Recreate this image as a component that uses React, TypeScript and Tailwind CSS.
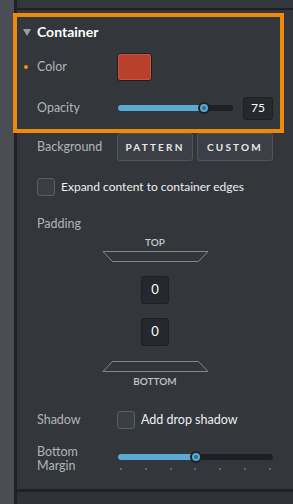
import React from "react";

function Trap({ flip }: { flip?: boolean }) {
  return (
    <svg width="107" height="11" viewBox="0 0 107 11" className="block">
      {flip ? (
        <path d="M10.5 0.5 H96.5 L106 10.5 H1 Z" fill="none" stroke="#83878d" strokeWidth="1" />
      ) : (
        <path d="M1 0.5 H106 L96.5 10.5 H10.5 Z" fill="none" stroke="#83878d" strokeWidth="1" />
      )}
    </svg>
  );
}

function Slider({ width, pct }: { width: number; pct: number }) {
  return (
    <div className="relative h-[6px] rounded-full bg-[#1e2024]" style={{ width }}>
      <div
        className="absolute left-0 top-0 h-[6px] rounded-full bg-[#5aaad4]"
        style={{ width: width * pct }}
      />
      <div
        className="absolute top-1/2 w-[12px] h-[12px] -translate-x-1/2 -translate-y-1/2 rounded-full bg-[#5aaad4] border-2 border-[#1e2125] flex items-center justify-center"
        style={{ left: width * pct }}
      >
        <div className="w-[4px] h-[4px] rounded-full bg-[#2f6f92]" />
      </div>
    </div>
  );
}

export default function App() {
  const font = { fontFamily: "Lato, 'Open Sans', sans-serif" };
  return (
    <div className="w-[293px] h-[504px] overflow-hidden flex bg-[#33363b]" style={font}>
      <div className="w-[14px] h-full bg-[#4a4d53]" />
      <div className="w-[3px] h-full bg-[#1f2125]" />
      <div className="flex-1 flex flex-col h-full">
        <div className="h-[8px]" />
        <div className="h-[2px] bg-[#1f2125]" />
        <div className="h-[3px]" />
        {/* Highlighted container section */}
        <div className="ml-[-4px] w-[271px] h-[120px] border-4 border-[#f08a0c] relative z-10 flex flex-col">
          <div className="h-[30px] flex items-center pl-[6px]">
            <svg width="8" height="7" viewBox="0 0 8 7" className="block">
              <path d="M0 0 H8 L4 7 Z" fill="#9a9ea4" />
            </svg>
            <span className="ml-[6px] text-[14px] font-bold text-white leading-none">Container</span>
          </div>
          <div className="h-[40px] flex items-center relative">
            <div className="absolute left-[7px] top-1/2 -translate-y-1/2 w-[4px] h-[4px] rounded-full bg-[#f0960f]" />
            <span className="ml-[20px] w-[80px] text-[12.5px] text-[#b1b5bb]">Color</span>
            <div className="w-[35px] h-[28px] rounded-[3px] bg-[#b9402a] border border-[#1e1f22] shadow-[inset_0_0_0_1px_rgba(255,255,255,0.12)]" />
          </div>
          <div className="h-[42px] flex items-center">
            <span className="ml-[20px] w-[81px] text-[12.5px] text-[#b1b5bb]">Opacity</span>
            <Slider width={115} pct={0.75} />
            <div className="ml-[10px] w-[30px] h-[23px] rounded-[3px] bg-[#25282c] border border-[#1d1f22] flex items-center justify-center text-[12px] text-white">
              75
            </div>
          </div>
        </div>
        {/* Background row */}
        <div className="h-[28px] flex items-center">
          <span className="ml-[20px] w-[80px] text-[12.5px] text-[#b1b5bb]">Background</span>
          <button className="w-[76px] h-[28px] rounded-[3px] bg-[#3c4046] border border-[#52565c] text-[10px] font-bold tracking-[2.2px] text-[#e6e8eb] flex items-center justify-center">
            PATTERN
          </button>
          <button className="ml-[4px] w-[76px] h-[28px] rounded-[3px] bg-[#3c4046] border border-[#52565c] text-[10px] font-bold tracking-[2.2px] text-[#e6e8eb] flex items-center justify-center">
            CUSTOM
          </button>
        </div>
        <div className="mt-[17px] h-[18px] flex items-center">
          <div className="ml-[20px] w-[18px] h-[18px] rounded-[3px] bg-[#3b3e44] border border-[#5a5e64]" />
          <span className="ml-[6px] text-[12px] text-[#eef0f2]">Expand content to container edges</span>
        </div>
        <div className="mt-[20px] h-[16px] flex items-center">
          <span className="ml-[20px] text-[12.5px] text-[#b1b5bb]">Padding</span>
        </div>
        {/* Padding diagram */}
        <div className="flex flex-col items-center">
          <div className="mt-[3px] h-[14px] flex items-center text-[10px] font-semibold text-[#c4c7cc]">TOP</div>
          <div className="mt-[2px]">
            <Trap />
          </div>
          <div className="mt-[14px] w-[28px] h-[28px] rounded-[3px] bg-[#25282c] border border-[#1d1f22] flex items-center justify-center text-[13px] text-white">
            0
          </div>
          <div className="mt-[14px] w-[28px] h-[28px] rounded-[3px] bg-[#25282c] border border-[#1d1f22] flex items-center justify-center text-[13px] text-white">
            0
          </div>
          <div className="mt-[15px]">
            <Trap flip />
          </div>
          <div className="mt-[2px] h-[14px] flex items-center text-[10px] font-semibold text-[#c4c7cc]">BOTTOM</div>
        </div>
        {/* Shadow */}
        <div className="mt-[23px] h-[18px] flex items-center">
          <span className="ml-[20px] w-[80px] text-[12.5px] text-[#b1b5bb]">Shadow</span>
          <div className="w-[18px] h-[18px] rounded-[3px] bg-[#3b3e44] border border-[#5a5e64]" />
          <span className="ml-[6px] text-[12.5px] text-[#eef0f2]">Add drop shadow</span>
        </div>
        {/* Bottom margin */}
        <div className="mt-[16px] flex">
          <div className="ml-[20px] w-[81px] text-[12.5px] leading-[14px] text-[#b1b5bb]">
            <div>Bottom</div>
            <div>Margin</div>
          </div>
          <div className="flex flex-col pt-[9px]">
            <Slider width={155} pct={0.5} />
            <div className="mt-[8px] w-[155px] px-[2px] flex justify-between">
              {[0, 1, 2, 3, 4, 5, 6].map((i) => (
                <div key={i} className="w-[2px] h-[2px] bg-[#63676d]" />
              ))}
            </div>
          </div>
        </div>
        <div className="flex-1" />
        <div className="h-[3px] bg-[#1f2125]" />
        <div className="h-[12px] bg-[#2f3237]" />
      </div>
    </div>
  );
}
